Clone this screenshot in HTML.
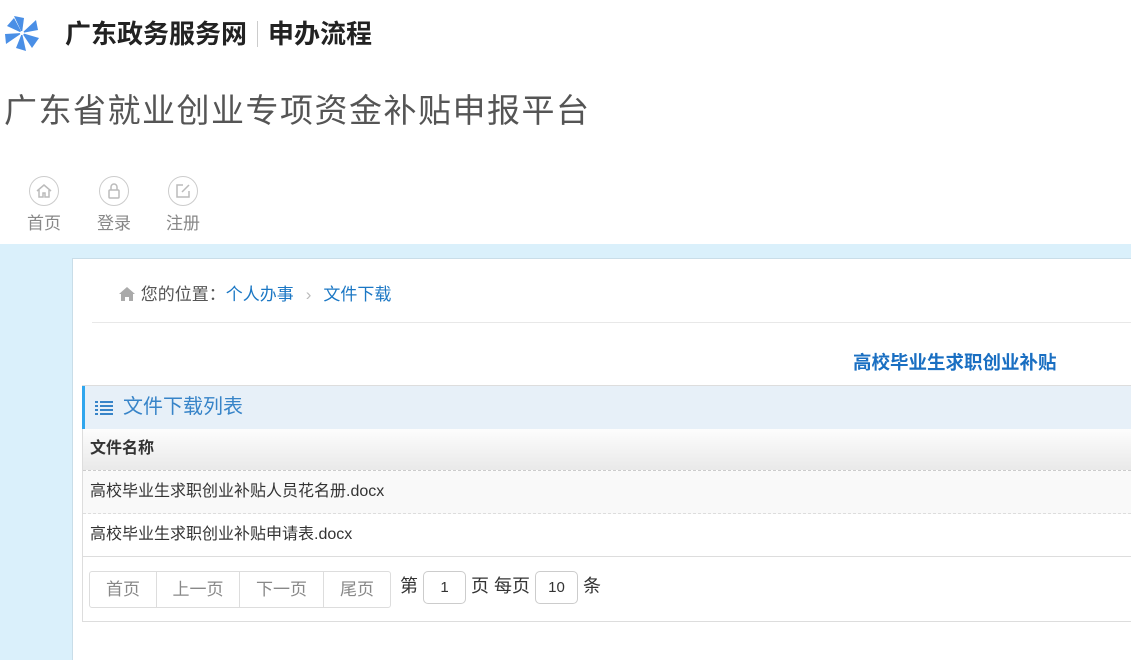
<!DOCTYPE html>
<html><head><meta charset="utf-8"><style>
*{margin:0;padding:0;box-sizing:border-box}
body{width:1131px;height:660px;overflow:hidden;background:#fff;font-family:"Liberation Sans","Noto Sans CJK SC",sans-serif;position:relative}
.abs{position:absolute}
.top1{left:65px;top:16px;font-size:26px;font-weight:bold;color:#222;line-height:36px}
.top1 .sep{display:inline-block;width:1px;height:26px;background:#ccc;margin:0 10px;vertical-align:-4px}
.big{left:4px;top:88px;font-size:33px;color:#555;letter-spacing:1.5px;line-height:46px}
.nav{top:176px;width:44px;text-align:center;color:#888;font-size:17px}
.nav .c{width:30px;height:30px;border:1.5px solid #ccc;border-radius:50%;margin:0 auto 3px;display:flex;align-items:center;justify-content:center}
.band{left:0;top:244px;width:1131px;height:416px;background:#daf0fb}
.panel{left:72px;top:258px;width:1059px;height:402px;background:#fff;border-left:1px solid #c9dde8;border-top:1px solid #c9dde8}
.crumb{left:118px;top:283px;font-size:17px;color:#555;line-height:24px}
.crumb a{color:#1b77c4}
.hr{left:92px;top:322px;width:1039px;height:1px;background:#e8e8e8}
.ttl{left:853px;top:349px;font-size:18.5px;font-weight:bold;color:#1a6fc2}
.box{left:82px;top:385px;width:1049px;height:237px;border:1px solid #ddd;border-right:none}
.hd{left:82px;top:386px;width:1049px;height:43px;background:#e7f0f8;border-left:3px solid #2fa6ee;color:#3784c8;font-size:20px;line-height:43px;padding-left:38px}
.th{left:83px;top:429px;width:1048px;height:42px;background:linear-gradient(#fdfdfd,#e9e9e9);font-weight:bold;font-size:16px;color:#333;line-height:40px;padding-left:7px;border-bottom:1px dashed #ccc}
.tr{left:83px;width:1048px;height:43px;font-size:16px;color:#333;line-height:42px;padding-left:7px}
.pg{left:89px;top:571px;height:37px;display:flex;border:1px solid #ddd;border-radius:3px}
.pg div{font-size:17px;color:#888;line-height:36px;border-right:1px solid #ddd;text-align:center}
.pg div:last-child{border-right:none}
.inp{display:inline-block;width:43px;height:33px;border:1px solid #ccc;border-radius:5px;text-align:center;line-height:31px;font-size:15px;vertical-align:middle;margin:0 5px}
</style></head><body>
<svg class="abs" style="left:4px;top:14px" width="36" height="38" viewBox="0 0 36 38">
<g fill="#4a8fe6"><polygon points="18,19 10,2 20,4"/><polygon points="18,19 32,6 34,16"/><polygon points="18,19 35,24 28,34"/><polygon points="18,19 22,37 12,34"/><polygon points="18,19 2,30 1,20"/><polygon points="18,19 3,12 10,4"/></g><circle cx="18" cy="19" r="2" fill="#fff"/></svg>
<div class="abs top1">广东政务服务网<span class="sep"></span>申办流程</div>
<div class="abs big">广东省就业创业专项资金补贴申报平台</div>
<div class="abs nav" style="left:22px"><div class="c"><svg width="18" height="18" viewBox="0 0 18 18" fill="none" stroke="#bbb" stroke-width="1.5"><path d="M2 9L9 3l7 6M4 8v7h4v-4h2v4h4V8"/></svg></div>首页</div>
<div class="abs nav" style="left:92px"><div class="c"><svg width="18" height="18" viewBox="0 0 18 18" fill="none" stroke="#bbb" stroke-width="1.5"><rect x="4" y="8" width="10" height="8" rx="1"/><path d="M6 8V5a3 3 0 016 0v3"/></svg></div>登录</div>
<div class="abs nav" style="left:161px"><div class="c"><svg width="18" height="18" viewBox="0 0 18 18" fill="none" stroke="#bbb" stroke-width="1.5"><path d="M9 3H3v12h12V9M8 10l7-7"/></svg></div>注册</div>
<div class="abs band"></div>
<div class="abs panel"></div>
<div class="abs crumb"><svg width="18" height="16" viewBox="0 0 18 16" style="vertical-align:-2px"><path d="M9 1L1 8h2v7h4v-4h4v4h4V8h2z" fill="#aaa"/></svg> 您的位置：<a>个人办事</a><span style="color:#bbb;margin:0 12px">›</span><a>文件下载</a></div>
<div class="abs hr"></div>
<div class="abs ttl">高校毕业生求职创业补贴</div>
<div class="abs box"></div>
<div class="abs hd">文件下载列表</div>
<svg class="abs" style="left:95px;top:400px" width="18" height="16" viewBox="0 0 18 16" fill="#3784c8"><rect x="0" y="1" width="3" height="2"/><rect x="5" y="1" width="13" height="2"/><rect x="0" y="5" width="3" height="2"/><rect x="5" y="5" width="13" height="2"/><rect x="0" y="9" width="3" height="2"/><rect x="5" y="9" width="13" height="2"/><rect x="0" y="13" width="3" height="2"/><rect x="5" y="13" width="13" height="2"/></svg>
<div class="abs th">文件名称</div>
<div class="abs tr" style="top:471px;background:#f9f9f9;border-bottom:1px dashed #ddd">高校毕业生求职创业补贴人员花名册.docx</div>
<div class="abs tr" style="top:514px;border-bottom:1px solid #ddd">高校毕业生求职创业补贴申请表.docx</div>
<div class="abs pg"><div style="width:67px">首页</div><div style="width:83px">上一页</div><div style="width:84px">下一页</div><div style="width:66px">尾页</div></div>
<div class="abs" style="left:400px;top:570px;font-size:18px;color:#333;line-height:32px">第<span class="inp">1</span>页 每页<span class="inp">10</span>条</div>
</body></html>
